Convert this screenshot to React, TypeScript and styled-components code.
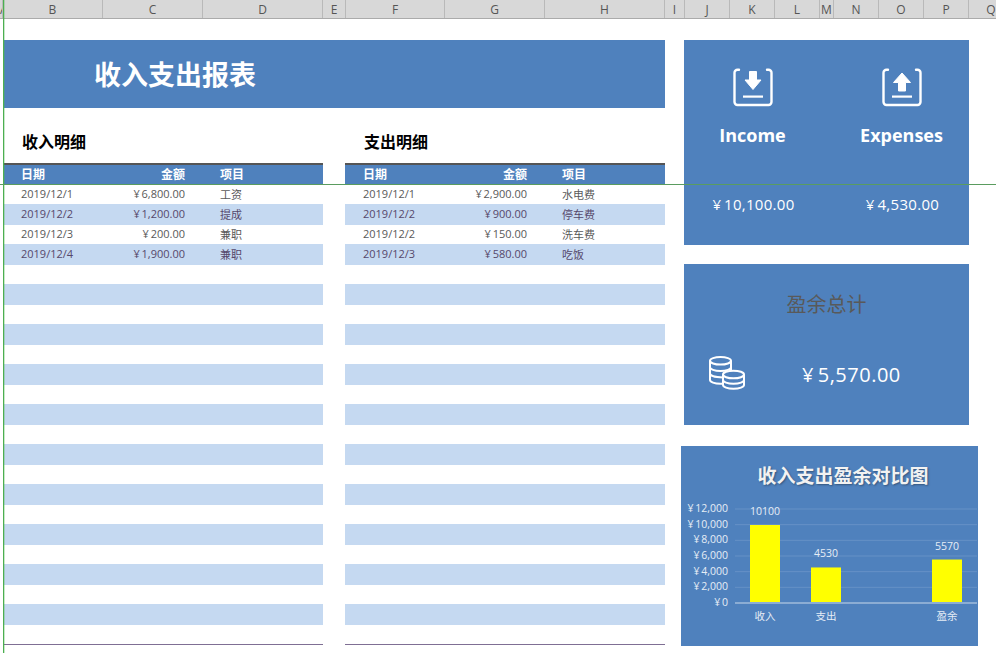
import styled, { createGlobalStyle } from 'styled-components';

const GlobalStyle = createGlobalStyle`
  html, body {
    margin: 0;
    padding: 0;
    background: #fff;
    overflow: hidden;
  }
  body {
    font-family: "Open Sans", "Noto Sans CJK SC", sans-serif;
  }
`;

const BLUE = '#4f81bd';

const Sheet = styled.div`
  position: relative;
  width: 996px;
  height: 653px;
  overflow: hidden;
`;

const ColumnBar = styled.div`
  display: flex;
  height: 18px;
  background: #d8d8d8;
  border-bottom: 1px solid #ababab;
`;

const ColumnCell = styled.div<{ $w: number }>`
  flex: 0 0 ${({ $w }) => $w}px;
  box-sizing: border-box;
  border-right: 1px solid #b9b9b9;
  overflow: hidden;
  font-size: 12px;
  line-height: 19px;
  text-align: center;
  color: #555;
`;

const FreezeV = styled.div`
  position: absolute;
  left: 3px;
  top: 0;
  width: 1px;
  height: 100%;
  background: #4caf50;
  box-shadow: 1px 0 0 rgba(76, 175, 80, 0.3);
`;

const FreezeH = styled.div`
  position: absolute;
  left: 0;
  top: 184px;
  width: 100%;
  height: 1px;
  background: #5a9c5f;
`;

const Body = styled.div`
  display: flex;
  padding: 21px 0 0 3px;
`;

const LeftArea = styled.div`
  width: 662px;
`;

const Banner = styled.div`
  height: 68px;
  padding-left: 91px;
  background: ${BLUE};
  color: #fff;
  font-size: 27px;
  font-weight: 700;
  line-height: 70px;
`;

const Tables = styled.div`
  display: grid;
  grid-template-columns: 320px 320px;
  column-gap: 22px;
`;

const SectionTitle = styled.div`
  height: 55px;
  padding-left: 19px;
  color: #000;
  font-size: 16px;
  font-weight: 700;
  line-height: 69px;
`;

const Row = styled.div`
  display: grid;
  box-sizing: border-box;
  grid-template-columns: 18px 80px 84px 35px 1fr;
  align-items: center;
`;

const HeadRow = styled(Row)`
  height: 21px;
  padding-bottom: 2px;
  border-top: 2px solid #555;
  background: ${BLUE};
  color: #fff;
  font-size: 12px;
  font-weight: 700;
`;

const RowList = styled.div`
  padding-top: 1px;
`;

const BodyRow = styled(Row)<{ $striped: boolean }>`
  height: ${({ $striped }) => ($striped ? 21 : 19)}px;
  padding-bottom: 2px;
  background: ${({ $striped }) => ($striped ? '#c5d9f1' : '#fff')};
  color: ${({ $striped }) => ($striped ? '#55486b' : '#595959')};
  font-size: 11px;
`;

const DateCell = styled.div`
  grid-column: 2;
`;

const AmountCell = styled.div`
  grid-column: 3;
  text-align: right;
`;

const ItemCell = styled.div`
  grid-column: 5;
`;

const EndLine = styled.div`
  height: 1px;
  background: #7f6f94;
`;

const RightArea = styled.div`
  display: flex;
  flex-direction: column;
  align-items: flex-start;
  margin-left: 16px;
`;

const Card = styled.div`
  width: 285px;
  margin-left: 3px;
  background: ${BLUE};
  color: #fff;
`;

const FlowCard = styled(Card)`
  display: grid;
  box-sizing: border-box;
  grid-template-columns: 149px 149px;
  justify-content: center;
  height: 205px;
  padding: 28px 0 0 1px;
`;

const FlowColumn = styled.div`
  display: flex;
  flex-direction: column;
  align-items: center;
`;

const FlowLabel = styled.div`
  margin-top: 12px;
  font-size: 18px;
  font-weight: 700;
  line-height: 32px;
`;

const FlowValue = styled.div`
  margin-top: 41px;
  padding-left: 2px;
  font-size: 15px;
  letter-spacing: 0.3px;
  line-height: 24px;
`;

const SurplusCard = styled(Card)`
  height: 161px;
  margin-top: 19px;
`;

const SurplusTitle = styled.div`
  padding-top: 27px;
  color: #595959;
  font-size: 20px;
  line-height: 28px;
  text-align: center;
`;

const SurplusRow = styled.div`
  display: flex;
  align-items: center;
  margin-top: 37px;
  padding-left: 25px;
`;

const SurplusValue = styled.div`
  margin: 4px 0 0 56px;
  font-size: 20px;
  letter-spacing: 0.5px;
  line-height: 30px;
`;

const ChartCard = styled.div`
  width: 297px;
  height: 200px;
  margin-top: 21px;
  background: ${BLUE};
`;

const ChartTitle = styled.div`
  padding: 17px 0 0 27px;
  color: #f2f2f2;
  font-size: 19px;
  font-weight: 700;
  line-height: 26px;
  text-align: center;
  text-shadow: 1px 1px 2px rgba(0, 0, 0, 0.35);
`;

const ChartSvg = styled.svg`
  display: block;
  margin-top: 20px;
  overflow: visible;
`;

const ChartText = styled.text<{ $anchor: string }>`
  fill: #e6edf6;
  font-size: 10.5px;
  text-anchor: ${({ $anchor }) => $anchor};
`;

const columns: [string, number][] = [
  ['A', 3],
  ['B', 100],
  ['C', 100],
  ['D', 120],
  ['E', 23],
  ['F', 99],
  ['G', 100],
  ['H', 120],
  ['I', 20],
  ['J', 45],
  ['K', 45],
  ['L', 45],
  ['M', 14],
  ['N', 45],
  ['O', 45],
  ['P', 45],
  ['Q', 45],
];

// thin space after the yen sign, Excel's currency format leaves a small gap there
const yen = (amount: string) => `¥\u2009${amount}`;

const incomeRows = [
  ['2019/12/1', yen('6,800.00'), '工资'],
  ['2019/12/2', yen('1,200.00'), '提成'],
  ['2019/12/3', yen('200.00'), '兼职'],
  ['2019/12/4', yen('1,900.00'), '兼职'],
];

const expenseRows = [
  ['2019/12/1', yen('2,900.00'), '水电费'],
  ['2019/12/2', yen('900.00'), '停车费'],
  ['2019/12/2', yen('150.00'), '洗车费'],
  ['2019/12/3', yen('580.00'), '吃饭'],
];

const ROW_COUNT = 23;

const DetailTable = ({ title, rows }: { title: string; rows: string[][] }) => (
  <div>
    <SectionTitle>{title}</SectionTitle>
    <HeadRow>
      <DateCell>日期</DateCell>
      <AmountCell>金额</AmountCell>
      <ItemCell>项目</ItemCell>
    </HeadRow>
    <RowList>
      {Array.from({ length: ROW_COUNT }, (_, i) => (
        <BodyRow key={i} $striped={i % 2 === 1}>
          <DateCell>{rows[i]?.[0]}</DateCell>
          <AmountCell>{rows[i]?.[1]}</AmountCell>
          <ItemCell>{rows[i]?.[2]}</ItemCell>
        </BodyRow>
      ))}
    </RowList>
    <EndLine />
  </div>
);

const TrayIcon = ({ up }: { up?: boolean }) => (
  <svg width="40" height="39" viewBox="0 0 40 39" fill="none">
    <path
      d="M6 1.800H4.500a3 3 0 0 0-3 3V34a3 3 0 0 0 3 3H35.500a3 3 0 0 0 3-3V4.800a3 3 0 0 0-3-3H34"
      stroke="#fff"
      strokeWidth="2.400"
      strokeLinecap="round"
    />
    <rect x="10" y="27.500" width="20" height="2.200" fill="#fff" />
    {up ? (
      <path d="M20 5 28.500 14.500H23.500V23H16.500V14.500H11.500Z" fill="#fff" stroke="#fff" strokeLinejoin="round" />
    ) : (
      <path d="M16.500 3.500H23.500V12H28L20 21.500 12 12H16.500Z" fill="#fff" stroke="#fff" strokeLinejoin="round" />
    )}
  </svg>
);

const CoinsIcon = () => (
  <svg width="37" height="34" viewBox="0 0 37 34" fill="none" stroke="#fff" strokeWidth="2">
    <ellipse cx="11.500" cy="4.800" rx="10.500" ry="3.800" />
    <path d="M1 4.800V24C1 26 5.500 27.800 11.500 27.800H14" />
    <path d="M22 4.800V16" />
    <path d="M1 11.200C1 13.200 5.500 15 11.500 15S22 13.200 22 11.200" />
    <path d="M1 17.600C1 19.600 5.500 21.400 14 21.400" />
    <path d="M14 18.500V29C14 31 18.500 32.800 24.500 32.800S35 31 35 29V18.500Z" fill={BLUE} stroke="none" />
    <path d="M14 18.500V29C14 31 18.500 32.800 24.500 32.800S35 31 35 29V18.500" />
    <ellipse cx="24.500" cy="18.500" rx="10.500" ry="3.800" fill={BLUE} />
    <path d="M14 24C14 26 18.500 27.800 24.500 27.800S35 26 35 24" />
  </svg>
);

const axis = ['12,000', '10,000', '8,000', '6,000', '4,000', '2,000', '0'];
const bars = [
  { label: '收入', value: 10100, x: 69 },
  { label: '支出', value: 4530, x: 130 },
  { label: '盈余', value: 5570, x: 251 },
];

// plot coordinates: y=0 lines up with the ¥12,000 gridline
const BASE_Y = 94;
const barHeight = (v: number) => (v / 12000) * 91.5;

const Chart = () => (
  <ChartSvg width="297" height="143" viewBox="0 0 297 143">
    {axis.map((label, i) => {
      const y = (BASE_Y / 6) * i;
      return (
        <g key={label}>
          {i < 6 && <line x1="54" x2="296" y1={y} y2={y} stroke="#6691c6" strokeWidth="1" />}
          <ChartText $anchor="end" x="47" y={y + 3}>
            {yen(label)}
          </ChartText>
        </g>
      );
    })}
    <line x1="54" x2="296" y1={BASE_Y} y2={BASE_Y} stroke="#c9d8ea" strokeWidth="1" />
    {bars.map((b) => {
      const h = barHeight(b.value);
      return (
        <g key={b.label}>
          <rect x={b.x} y={BASE_Y - 1 - h} width="30" height={h} fill="#ffff00" />
          <ChartText $anchor="middle" x={b.x + 15} y={BASE_Y - 11 - h}>
            {b.value}
          </ChartText>
          <ChartText $anchor="middle" x={b.x + 15} y={BASE_Y + 17}>
            {b.label}
          </ChartText>
        </g>
      );
    })}
  </ChartSvg>
);

export default function App() {
  return (
    <Sheet>
      <GlobalStyle />
      <ColumnBar>
        {columns.map(([name, w]) => (
          <ColumnCell key={name} $w={w}>
            {name}
          </ColumnCell>
        ))}
      </ColumnBar>
      <Body>
        <LeftArea>
          <Banner>收入支出报表</Banner>
          <Tables>
            <DetailTable title="收入明细" rows={incomeRows} />
            <DetailTable title="支出明细" rows={expenseRows} />
          </Tables>
        </LeftArea>
        <RightArea>
          <FlowCard>
            <FlowColumn>
              <TrayIcon />
              <FlowLabel>Income</FlowLabel>
              <FlowValue>{yen('10,100.00')}</FlowValue>
            </FlowColumn>
            <FlowColumn>
              <TrayIcon up />
              <FlowLabel>Expenses</FlowLabel>
              <FlowValue>{yen('4,530.00')}</FlowValue>
            </FlowColumn>
          </FlowCard>
          <SurplusCard>
            <SurplusTitle>盈余总计</SurplusTitle>
            <SurplusRow>
              <CoinsIcon />
              <SurplusValue>{yen('5,570.00')}</SurplusValue>
            </SurplusRow>
          </SurplusCard>
          <ChartCard>
            <ChartTitle>收入支出盈余对比图</ChartTitle>
            <Chart />
          </ChartCard>
        </RightArea>
      </Body>
      <FreezeV />
      <FreezeH />
    </Sheet>
  );
}
